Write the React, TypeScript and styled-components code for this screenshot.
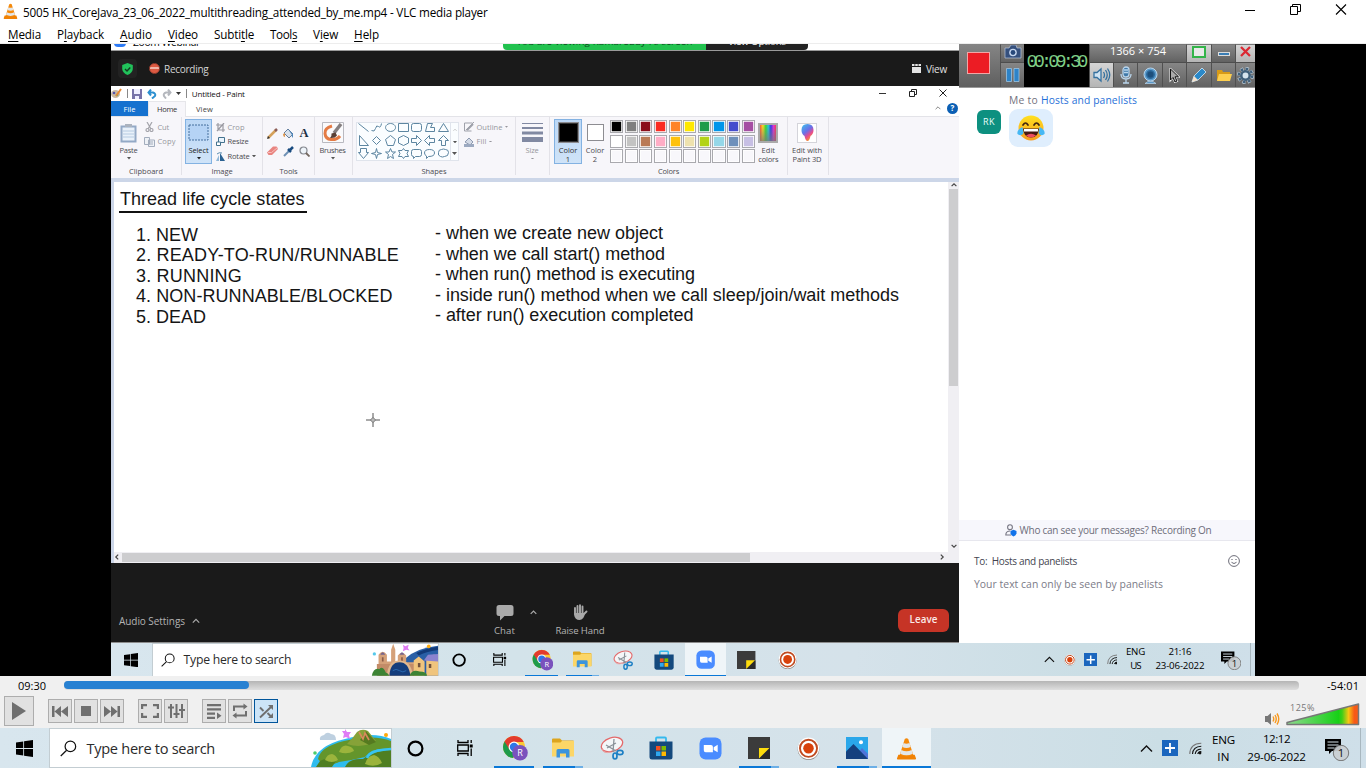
import React, { useLayoutEffect, useRef, useState } from "react";
import styled, { createGlobalStyle } from "styled-components";

const Global = createGlobalStyle`
  * { box-sizing: border-box; }
  html, body { margin: 0; padding: 0; overflow: hidden; background: #000; }
  body { font-family: "Open Sans", "Noto Sans", sans-serif; color: #000; }
  svg { display: block; flex: none; }
`;

/* ---------- text ---------- */

const TextBox = styled.span<{ $size: number; $color?: string; $bold?: number; $font?: string; $lh?: number }>`
  display: block;
  flex: none;
  width: max-content;
  white-space: pre;
  font-size: ${(p) => p.$size}px;
  line-height: ${(p) => p.$lh ?? Math.round(p.$size * 1.4)}px;
  color: ${(p) => p.$color ?? "inherit"};
  font-weight: ${(p) => p.$bold ?? 400};
  ${(p) => p.$font && `font-family: ${p.$font};`}
`;

type TProps = {
  w: number;
  size: number;
  color?: string;
  bold?: number;
  font?: string;
  lh?: number;
  children: React.ReactNode;
};

/* A label whose tracking adapts so that it always takes the given width. */
function T({ w, size, color, bold, font, lh, children }: TProps) {
  const ref = useRef<HTMLSpanElement>(null);
  const [track, setTrack] = useState(0);
  useLayoutEffect(() => {
    const el = ref.current;
    if (!el) return;
    const n = (el.textContent ?? "").length;
    if (n > 1) setTrack((t) => t + (w - el.getBoundingClientRect().width) / n);
  }, [w]);
  return (
    <TextBox ref={ref} $size={size} $color={color} $bold={bold} $font={font} $lh={lh} style={{ letterSpacing: track }}>
      {children}
    </TextBox>
  );
}

/* ---------- window chrome ---------- */

const Page = styled.main`
  width: 1366px;
  height: 768px;
  display: flex;
  flex-direction: column;
  overflow: hidden;
  background: #f0f0f0;
`;

const TitleBar = styled.header`
  height: 24px;
  background: #fff;
  display: flex;
  align-items: center;
  padding: 0 19px 1px 3px;
  gap: 5px;
`;

const WindowButtons = styled.div`
  margin-left: auto;
  display: flex;
  align-items: center;
  gap: 34px;
  padding-bottom: 4px;
`;

const MenuBar = styled.nav`
  height: 20px;
  background: #fff;
  border-bottom: 1px solid #ededed;
  display: flex;
  align-items: center;
  padding-left: 8px;
  gap: 16px;
  u { text-underline-offset: 2px; text-decoration-thickness: 1px; }
`;

const Stage = styled.section`
  height: 632px;
  background: #000;
  display: flex;
  justify-content: center;
`;

const Video = styled.div`
  width: 1144px;
  height: 632px;
  display: flex;
  flex-direction: column;
  overflow: hidden;
`;

const Split = styled.div`
  height: 599px;
  display: flex;
`;

/* ---------- webinar window ---------- */

const Webinar = styled.section`
  width: 848px;
  display: flex;
  flex-direction: column;
  background: #1a1a1a;
`;

const WebinarTitle = styled.div`
  height: 7px;
  background: #fff;
  border-bottom: 1px solid #9a9a9a;
  display: flex;
  align-items: flex-end;
  overflow: hidden;
`;
const ZoomDot = styled.div`
  width: 12px;
  height: 12px;
  border-radius: 4px;
  background: #2d7bf6;
  margin: 0 7px 3px 3px;
`;
const ClippedText = styled.div<{ $w?: number; $bg?: string; $up?: number; $ml?: number; $r?: string }>`
  height: 14px;
  width: ${(p) => (p.$w ? p.$w + "px" : "auto")};
  margin-left: ${(p) => p.$ml ?? 0}px;
  background: ${(p) => p.$bg ?? "transparent"};
  border-radius: ${(p) => p.$r ?? 0};
  display: flex;
  justify-content: center;
  align-items: flex-end;
  padding-bottom: ${(p) => p.$up ?? 0}px;
`;

const WebinarBar = styled.div`
  height: 35px;
  display: flex;
  align-items: center;
  padding: 0 12px 0 7px;
`;
const ShieldBox = styled.div`
  width: 19px;
  height: 19px;
  border-radius: 4px;
  background: #222;
  display: grid;
  place-items: center;
  margin-right: 12px;
`;
const RecDot = styled.div`
  width: 11px;
  height: 11px;
  border-radius: 50%;
  background: linear-gradient(#dd5a42 35%, #f0b5a8 38%, #f0b5a8 58%, #dd5a42 61%);
  border: 1px solid #9c3f30;
  margin-right: 4px;
`;
const ViewButton = styled.div`
  margin-left: auto;
  display: flex;
  align-items: center;
  gap: 5px;
`;

const WebinarFooter = styled.footer`
  height: 80px;
  border-bottom: 1px solid #8c8c8c;
  display: flex;
  padding: 0 10px 0 8px;
`;
const AudioSettings = styled.div`
  display: flex;
  align-items: center;
  gap: 7px;
  width: 367px;
  height: 16px;
  margin-top: 50px;
`;
const FooterAction = styled.div<{ $w: number }>`
  width: ${(p) => p.$w}px;
  margin-top: 41px;
  display: flex;
  flex-direction: column;
  align-items: center;
  gap: 3px;
`;
const ChevronSlot = styled.div`
  width: 29px;
  margin-top: 46px;
  padding-right: 9px;
  display: flex;
  justify-content: center;
`;
const Leave = styled.div`
  width: 51px;
  height: 23px;
  margin: 46px 0 0 auto;
  border-radius: 6px;
  background: #c63426;
  display: grid;
  place-items: center;
  padding-bottom: 1px;
`;

/* ---------- paint ---------- */

const Paint = styled.section`
  height: 477px;
  display: flex;
  flex-direction: column;
  background: #fff;
`;
const PaintTitle = styled.div`
  height: 15px;
  display: flex;
  align-items: center;
  gap: 4.7px;
  padding-right: 12px;
`;
const Bar = styled.i`
  width: 1px;
  height: 9px;
  background: #888;
`;
const Tabs = styled.div`
  height: 16px;
  display: flex;
  align-items: center;
  border-bottom: 1px solid #e3e3e8;
`;
const Tab = styled.div<{ $w: number; $kind?: "file" | "on" }>`
  width: ${(p) => p.$w}px;
  height: ${(p) => (p.$kind === "on" ? 16 : 15)}px;
  align-self: flex-start;
  display: grid;
  place-items: center;
  background: ${(p) => (p.$kind === "file" ? "#1571cf" : p.$kind === "on" ? "#f7f6fa" : "#fff")};
  border: ${(p) => (p.$kind === "on" ? "1px solid #e6e6ea" : "0")};
  border-bottom: 0;
  padding-bottom: ${(p) => (p.$kind === "on" ? 2 : 0)}px;
`;
const TabEnd = styled.div`
  margin-left: auto;
  display: flex;
  align-items: center;
  gap: 6px;
  padding: 0 1px 1px 0;
`;
const Help = styled.div`
  width: 11px;
  height: 11px;
  border-radius: 50%;
  background: #0b5fb4;
  display: grid;
  place-items: center;
`;
const Ribbon = styled.div`
  height: 61px;
  background: #f7f6fa;
  display: flex;
`;
const Group = styled.div<{ $w: number }>`
  width: ${(p) => p.$w}px;
  margin-bottom: 3px;
  border-right: 1px solid #e3e2e8;
  display: flex;
  flex-direction: column;
  align-items: center;
`;
const GroupBody = styled.div<{ $pl?: number; $gap?: number }>`
  height: 50px;
  flex: none;
  width: 100%;
  display: flex;
  padding-left: ${(p) => p.$pl ?? 0}px;
  gap: ${(p) => p.$gap ?? 0}px;
`;
const BigButton = styled.div<{ $w: number; $on?: boolean }>`
  width: ${(p) => p.$w}px;
  height: 45px;
  margin-top: 2px;
  flex: none;
  display: flex;
  flex-direction: column;
  align-items: center;
  background: ${(p) => (p.$on ? "linear-gradient(#bcd8f6, #cfe3f8)" : "transparent")};
  border: 1px solid ${(p) => (p.$on ? "#83b2e2" : "transparent")};
  padding-top: 2px;
`;
const IconArea = styled.div`
  height: 21px;
  display: grid;
  place-items: center;
  margin-bottom: 3px;
  flex: none;
`;
const IconGap = styled.div`
  height: 8px;
  display: grid;
  place-items: center;
`;
const SmallRows = styled.div`
  display: flex;
  flex-direction: column;
  padding-top: 5px;
  gap: 4.5px;
`;
const SmallRow = styled.div`
  display: flex;
  align-items: center;
  height: 10px;
  gap: 2.5px;
`;
const ToolGrid = styled.div`
  display: grid;
  grid-template-columns: repeat(3, 16px);
  grid-template-rows: 18px 18px;
  place-items: center;
  padding-top: 7px;
`;
const ShapeBox = styled.div`
  width: 103px;
  height: 39px;
  margin-top: 5px;
  background: #fafdff;
  border: 1px solid #e0e4ec;
  display: flex;
`;
const ShapeGrid = styled.div`
  width: 93px;
  display: grid;
  grid-template-columns: repeat(7, 13.3px);
  grid-template-rows: repeat(3, 13px);
  align-content: center;
`;
const ShapeScroll = styled.div`
  flex: 1;
  border-left: 1px solid #e0e4ec;
  display: flex;
  flex-direction: column;
  justify-content: space-around;
  align-items: center;
`;
const ColorSquare = styled.div<{ $c: string; $s: number }>`
  width: ${(p) => p.$s}px;
  height: ${(p) => p.$s}px;
  background: ${(p) => p.$c};
  border: 1px solid #8d8d92;
  box-shadow: inset 0 0 0 1px ${(p) => (p.$c === "#000" ? "#333" : "#fff")};
`;
const Palette = styled.div`
  display: grid;
  grid-template-columns: repeat(10, 13.2px);
  grid-auto-rows: 13.4px;
  gap: 1.3px 1.45px;
  margin: 3px 0 0 2px;
  height: 44px;
`;
const Swatch = styled.i<{ $c?: string }>`
  background: ${(p) => p.$c ?? "#f8f7fb"};
  border: 1px solid #a9a9ae;
  box-shadow: inset 0 0 0 0.8px #fff;
`;
const Rainbow = styled.div`
  width: 20px;
  height: 20px;
  border: 2px solid #aaa;
  background: linear-gradient(rgba(255, 255, 255, 0), rgba(120, 120, 120, 0.75)),
    linear-gradient(90deg, #f53, #fd2 18%, #3d3 36%, #2cd 52%, #33e 68%, #d3d 84%, #f35);
`;
const P3D = styled.div`
  width: 20px;
  height: 20px;
  border: 1px solid #d4d4da;
  background: #fff;
  display: grid;
  place-items: center;
`;

const Work = styled.div`
  flex: 1;
  display: flex;
  border-top: 4px solid #ccd6e8;
  border-left: 3px solid #ccd6e8;
  background: #f0eff3;
`;
const CanvasCol = styled.div`
  width: 834px;
  display: flex;
  flex-direction: column;
`;
const Canvas = styled.div`
  height: 370px;
  background: #fff;
  padding: 7px 0 0 5px;
  position: relative;
`;
const Heading = styled.div`
  width: 188px;
  height: 24px;
  border-bottom: 2px solid #111;
  padding-left: 1px;
`;
const States = styled.div`
  display: flex;
  margin-top: 10px;
  padding-left: 17px;
`;
const StateCol = styled.div<{ $w?: number; $top?: number }>`
  width: ${(p) => p.$w ?? 480}px;
  padding-top: ${(p) => p.$top ?? 0}px;
  display: flex;
  flex-direction: column;
`;
const CrossHair = styled.svg`
  position: absolute;
  left: 252px;
  top: 231px;
`;
const HScroll = styled.div`
  flex: 1;
  display: flex;
  align-items: center;
  justify-content: space-between;
  padding: 0 3px 1px 0;
`;
const HThumb = styled.div`
  width: 628px;
  height: 9px;
  margin: 0 auto 0 2px;
  background: #cdcdcf;
`;
const VScroll = styled.div`
  flex: 1;
  height: 370px;
  display: flex;
  flex-direction: column;
  align-items: center;
  padding: 0 0 3px;
`;
const VThumb = styled.div`
  width: 9px;
  height: 197px;
  margin: 1px 0 auto;
  background: #cdcdcf;
`;

/* ---------- chat side ---------- */

const Side = styled.aside`
  width: 296px;
  background: #fff;
  display: flex;
  flex-direction: column;
`;
const Recorder = styled.div`
  height: 44px;
  display: flex;
  background: #777;
  border-bottom: 1px solid #999;
`;
const RecMain = styled.div`
  width: 41px;
  background: linear-gradient(#858585, #5f5f5f);
  display: grid;
  place-items: center;
  padding-right: 2px;
`;
const RedSquare = styled.div`
  width: 23px;
  height: 22px;
  background: #ec1c24;
  border: 1px solid #f3a5a5;
  margin-top: -5px;
`;
const CellCol = styled.div<{ $w: number }>`
  width: ${(p) => p.$w}px;
  display: flex;
  flex-direction: column;
`;
const CellRow = styled.div`
  display: flex;
`;
const Cell = styled.div<{ $w: number; $h: number; $on?: boolean; $pb?: number }>`
  width: ${(p) => p.$w}px;
  height: ${(p) => p.$h}px;
  flex: none;
  background: ${(p) => (p.$on ? "linear-gradient(#d5d5d5, #b5b5b5)" : "linear-gradient(#868686, #626262)")};
  border-left: 1px solid #505050;
  border-top: 1px solid ${(p) => (p.$h > 20 ? "#4d4d4d" : "#777")};
  display: flex;
  align-items: center;
  justify-content: center;
  padding-bottom: ${(p) => p.$pb ?? 0}px;
  overflow: hidden;
`;
const Timer = styled.div`
  width: 65px;
  background: #000;
  display: grid;
  place-items: center;
  padding: 0 2px 5px 0;
`;
const ChatBody = styled.div`
  height: 432px;
  padding: 4px 0 0 18px;
`;
const Sender = styled.div`
  display: flex;
  gap: 3px;
  padding-left: 32px;
`;
const MessageRow = styled.div`
  display: flex;
  gap: 8px;
  padding-top: 1px;
`;
const Avatar = styled.div`
  width: 24px;
  height: 24px;
  margin-top: 1px;
  border-radius: 6px;
  background: #0d9080;
  display: grid;
  place-items: center;
`;
const Bubble = styled.div`
  width: 44px;
  height: 38px;
  border-radius: 9px;
  background: #dfeefd;
  display: grid;
  place-items: center;
`;
const Notice = styled.div`
  height: 21px;
  background: #f7f7fc;
  border-bottom: 1px solid #e7e7ee;
  display: flex;
  align-items: center;
  justify-content: center;
  gap: 3px;
  padding-left: 2px;
`;
const Compose = styled.div`
  padding: 12px 15px 0;
  display: flex;
  flex-direction: column;
  gap: 7px;
`;
const ComposeTop = styled.div`
  display: flex;
  align-items: center;
  justify-content: space-between;
`;

/* ---------- taskbar (all lengths in em: 10px = full size) ---------- */

const TaskbarBox = styled.footer<{ $k: number }>`
  font-size: ${(p) => p.$k * 10}px;
  height: 4em;
  flex: none;
  display: flex;
  background: linear-gradient(90deg, #d8e6ee, #d3e3ea 35%, #d5e2ea 65%, #cbdee5 85%, #cfdfe9);
`;
const Slot = styled.div<{ $w: number; $on?: boolean }>`
  width: ${(p) => p.$w / 10}em;
  height: 4em;
  flex: none;
  background: ${(p) => (p.$on ? "#eff5f8" : "transparent")};
  display: grid;
  grid-template-rows: 1fr 0.2em;
  place-items: center;
  padding-top: 0.2em;
`;
const Underline = styled.i<{ $kind: string }>`
  display: block;
  height: 2px;
  width: ${(p) => (p.$kind === "active" ? "100%" : "4em")};
  background: ${(p) =>
    p.$kind === "many" ? "linear-gradient(90deg, #0a78d7 80%, #6cafe6 80%)" : "#0a78d7"};
  align-self: end;
`;
const Search = styled.div`
  width: 34.3em;
  height: 4em;
  background: #fff;
  border: 1px solid #c3cdd2;
  display: flex;
  align-items: center;
  padding-left: 1em;
  gap: 1em;
`;
const ArtSlot = styled.div`
  margin-left: auto;
  align-self: flex-end;
`;
const Art = styled.svg`
  width: 8em;
  height: 3.9em;
`;
const Ico = styled.svg<{ $w: number; $h?: number }>`
  width: ${(p) => p.$w / 10}em;
  height: ${(p) => (p.$h ?? p.$w) / 10}em;
`;
const Tray = styled.div`
  margin-left: auto;
  display: flex;
  align-items: center;
  padding-right: 0.5em;
`;
const TrayItem = styled.div<{ $w: number; $up?: boolean }>`
  width: ${(p) => p.$w / 10}em;
  display: flex;
  flex-direction: column;
  align-items: center;
  padding-bottom: ${(p) => (p.$up ? 0.1 : 0)}em;
`;
const TrayEnd = styled.i`
  height: 4em;
  width: 1px;
  background: #a8b7bf;
`;

/* ---------- player controls ---------- */

const Controls = styled.section`
  height: 52px;
  background: #f0f0f0;
  display: flex;
  flex-direction: column;
`;
const SeekRow = styled.div`
  height: 20px;
  display: flex;
  align-items: center;
  padding-left: 18px;
`;
const Track = styled.div`
  width: 1235px;
  height: 9px;
  margin: 0 28px 2px 18px;
  border-radius: 4px;
  background: linear-gradient(#b5b5b5, #dedede);
`;
const Played = styled.div`
  width: 185px;
  height: 8px;
  border-radius: 4px;
  background: #2881d2;
`;
const ButtonRow = styled.div`
  height: 30px;
  display: flex;
  align-items: center;
  padding: 0 6px 0 4px;
`;
const Btn = styled.div<{ $s?: number; $ml?: number; $on?: boolean }>`
  width: ${(p) => p.$s ?? 24}px;
  height: ${(p) => p.$s ?? 24}px;
  margin-left: ${(p) => p.$ml ?? 2}px;
  background: ${(p) => (p.$on ? "#cce4f7" : "#e1e1e1")};
  border: 1px solid ${(p) => (p.$on ? "#00559b" : "#adadad")};
  display: grid;
  place-items: center;
`;
const Volume = styled.div`
  margin-left: auto;
  display: flex;
  align-items: flex-end;
  height: 30px;
  gap: 6px;
`;
const VolumeMeter = styled.div`
  position: relative;
  width: 74px;
  height: 24px;
  margin-bottom: 0;
`;
const VolumeText = styled.div`
  position: absolute;
  left: 4px;
  top: 0;
`;

/* ---------- icons ---------- */

const Cone = () => (
  <g>
    <path d="M3.5 18.5 2 22.5q0 1 1 1h18q1 0 1-1l-1.500-4z" fill="#f08205" />
    <path d="M5 18.500 10.200 2q1.800-1.400 3.600 0L19 18.500q-7 3.500-14 0z" fill="#f58a0c" />
    <path d="m8.900 6.200-1.300 4.200q4.400 2.200 8.800 0l-1.300-4.200q-3.100 1.600-6.200 0zM6.600 13.600l-1.200 3.800q6.600 3.400 13.200 0l-1.200-3.800q-5.400 2.600-10.800 0z" fill="#e3e7ea" />
  </g>
);
const Caret = ({ c = "#555", s = 4 }: { c?: string; s?: number }) => (
  <svg width={s} height={s * 0.6} viewBox="0 0 10 6"><path d="M0 0h10L5 6z" fill={c} /></svg>
);
const Chevron = ({ w, c, sw = 1.2, dir = "up" }: { w: number; c: string; sw?: number; dir?: string }) => {
  const d: Record<string, string> = { up: "M1 7l4-4 4 4", down: "M1 3l4 4 4-4", left: "M7 1 3 5l4 4", right: "M3 1l4 4-4 4" };
  return <svg width={w} height={w} viewBox="0 0 10 10"><path d={d[dir]} fill="none" stroke={c} strokeWidth={(sw * 10) / w} /></svg>;
};
const WinLogo = () => (
  <Ico $w={17} viewBox="0 0 16 16"><path d="M0 2.300 6.800 1.300V7.600H0zM7.600 1.200 16 0v7.600H7.600zM0 8.400h6.800v6.300L0 13.700zM7.600 8.400H16V16l-8.400-1.200z" /></Ico>
);
const Chrome = () => (
  <Ico $w={28} $h={26} viewBox="-2.500 0 28 26">
    <circle cx="11.500" cy="12" r="11" fill="#fcc934" />
    <path d="M2 6.500A11 11 0 0 0 10.500 23l5-8.500-4-2.500z" fill="#1e9b4b" />
    <path d="M11.500 7h9.700A11 11 0 0 0 2 6.500l5 8z" fill="#e33b2e" />
    <circle cx="11.500" cy="12" r="5.400" fill="#fff" /><circle cx="11.500" cy="12" r="4.200" fill="#2f76e8" />
    <circle cx="17.500" cy="17.800" r="7.800" fill="#7a52bd" />
    <text x="17.500" y="21" fontSize="9" fill="#fff" textAnchor="middle">R</text>
  </Ico>
);
const Folder = () => (
  <Ico $w={22} $h={20} viewBox="0 0 22 20">
    <path d="M0 1.500Q0 .5 1 .5h7l2 2h11q1 0 1 1V18H0z" fill="#dda51e" />
    <path d="M0 4.500h8.500l1.500-1.500h12V18.500H0z" fill="#fcd667" />
    <path d="M4.500 19.500v-7q0-1.500 1.500-1.500h10q1.500 0 1.500 1.500v7h-3.500v-4h-6v4z" fill="#3c94dc" />
  </Ico>
);
const Snip = () => (
  <Ico $w={24} viewBox="0 0 24 24" fill="none">
    <ellipse cx="12" cy="8.500" rx="11" ry="6.800" transform="rotate(-18 12 8.500)" fill="#f4f6f8" stroke="#e4696a" strokeWidth="1.300" />
    <path d="M2 13q1 5 9 3" stroke="#e9a3a3" />
    <path d="m6 9 10 6M14 3l-1 13M7 12l9-5" stroke="#8b9299" strokeWidth="1.300" />
    <ellipse cx="20" cy="16.500" rx="3" ry="2.200" stroke="#1d7fc4" strokeWidth="1.700" />
    <ellipse cx="15" cy="20" rx="2" ry="3" stroke="#1d7fc4" strokeWidth="1.700" />
  </Ico>
);
const Store = () => (
  <Ico $w={24} viewBox="0 0 24 24">
    <path d="M7 6V2.500q0-1 1-1h8q1 0 1 1V6" fill="none" stroke="#35b9ee" strokeWidth="1.800" />
    <path d="M.5 5.500h23V21q0 2.500-2.500 2.500H3Q.5 23.500.5 21z" fill="#14497d" />
    <path d="M7 10h4.500v4.500H7z" fill="#f25022" /><path d="M12.500 10H17v4.500h-4.500z" fill="#7fba00" />
    <path d="M7 15.500h4.500V20H7z" fill="#2fa8ef" /><path d="M12.500 15.500H17V20h-4.500z" fill="#ffb900" />
  </Ico>
);
const Zoom = () => (
  <Ico $w={23} viewBox="0 0 24 24">
    <rect x=".5" y=".5" width="23" height="23" rx="6.500" fill="#4a8cff" />
    <path d="M5 8.300h7.500q2 0 2 2v5.500H7q-2 0-2-2zM15.300 10.700 19.500 8v8l-4.200-2.500z" fill="#fff" />
  </Ico>
);
const Sticky = () => (
  <Ico $w={22} viewBox="0 0 22 22"><path d="M0 0h22v22H0z" fill="#3b3b3b" /><path d="M11 21.500V11h10.500z" fill="#fddc0c" /><path d="M11 22 22 11v11z" fill="#2a2a2a" /></Ico>
);
const Rec = ({ w = 23 }: { w?: number }) => (
  <Ico $w={w} viewBox="0 0 24 24">
    <circle cx="12" cy="12.500" r="11.300" fill="#8d8580" /><circle cx="12" cy="11.800" r="11.200" fill="#fff" />
    <circle cx="12" cy="11.800" r="8.900" fill="none" stroke="#c04a20" strokeWidth="2" /><circle cx="12" cy="11.800" r="5.500" fill="#d8410b" />
  </Ico>
);
const Photos = () => (
  <Ico $w={22} viewBox="0 0 22 22">
    <path d="M0 0h22v22H0z" fill="#2aa7ea" /><path d="M12 16l4-5 6 6v5H12z" fill="#4f74d8" />
    <path d="M0 14.500 7.500 7 22 22H0z" fill="#15407e" /><circle cx="15" cy="5.300" r="2" fill="#fff" />
  </Ico>
);
const TaskView = () => (
  <Ico $w={16} viewBox="0 0 16 16" fill="none" stroke="#000" strokeWidth="1.300">
    <path d="M1 0v2.500h10V0M1 16v-2.500h10V16M.7 5h10.600v6H.7zM14.200 0v3M14.200 8.500V16" /><path d="M12.700 4.500h3v3h-3z" fill="#000" stroke="none" />
  </Ico>
);
const Wifi = () => (
  <Ico $w={13} viewBox="0 0 13 13" fill="none" stroke="#111" strokeWidth="1.100">
    <path d="M.8 12Q1 1.500 12.300 1.200" stroke="#777" /><path d="M3.500 12Q4 4.500 12.300 4.200M6.200 12Q6.700 7.300 12.300 7" /><path d="M8.800 12q.4-2.200 3.500-2.400" /><circle cx="11" cy="11" r="1.400" fill="#111" stroke="none" />
  </Ico>
);
const Plus = () => (
  <Ico $w={16} viewBox="0 0 16 16"><path d="M0 0h16v16H0z" fill="#1b66be" /><path d="M8 3v10M3 8h10" stroke="#fff" strokeWidth="1.800" /></Ico>
);
const Notify = () => (
  <Ico $w={25} $h={25} viewBox="0 -1 25 25">
    <path d="M0 2h16v12H7l-3 3v-3H0z" /><path d="M2.500 5h11M2.500 8h11M2.500 11h7" stroke="#d5e1e8" strokeWidth="1.100" />
    <circle cx="16" cy="16" r="7.700" fill="#c9cfd2" fillOpacity=".93" stroke="#777" /><text x="16" y="20" fontSize="11.500" textAnchor="middle" fill="#111">1</text>
  </Ico>
);
const IslandArt = () => (
  <Art viewBox="0 0 80 39">
    <path d="M0 39Q4 18 34 11q28-8 46 0v28z" fill="#2fbcee" />
    <path d="M7 31q2-12 26-18 30-7 47 0v8q-20-2-26 8-12 3-26 5-14 7-21-3z" fill="#64952b" />
    <path d="M9 33q6-4 16 0l-4 6H5zM34 39q4-9 18-8 8-8 28-9v17z" fill="#4f7f22" />
    <path d="M36 16q6-6 10-12 5-4 11-1l8 10q-14 8-29 3z" fill="#86a238" /><path d="m55 3 10 11-7 3-9-5z" fill="#557a20" /><path d="M48 4l4 7 2-6 4 7" fill="none" stroke="#d88a5c" strokeWidth="1.600" />
    <path d="M28 24q3-8 9-6 5 1 6 5-7 4-15 1zM14 32q2-6 7-6 4 1 6 6-6 4-13 0zM54 36q2-8 9-9 5 1 8 8-8 5-17 1z" fill="#9bb43c" />
    <path d="M56 30q3-8 24-9" fill="none" stroke="#38c4f2" strokeWidth="2.500" />
    <path d="M9 12q-1-4 4-5 3-4 7-1 5 0 5 6z" fill="#bed0e0" /><circle cx="4" cy="25" r="1.800" fill="#4ccb6c" /><circle cx="75" cy="7" r="2" fill="#ffa90a" />
    <path d="m34 1 2 3 4 0-2 3 1 4-4-2-3 1 1-4-2-3h3z" fill="#e07cf5" />
  </Art>
);
const CityArt = () => (
  <Art viewBox="-4 0 80 39">
    <path d="M35 20q15-15 45-17v36H35z" fill="#295fa6" /><path d="M50 12q12-6 30-8v4q-18 2-27 7z" fill="#123a78" />
    <path d="M5 39V14q5-7 10 0v8h5V8l2.500-7L25 8v14h3V15q5-7 10 0v8h14v16z" fill="#d5a179" />
    <path d="M3 25h49v14H3z" fill="#c38c68" /><path d="M7 14q3-6 6 0zM30 14q3-6 6 0z" fill="#75658d" /><path d="M9 17h2v5H9zM32 17h2v5h-2z" fill="#8a5c48" />
    <path d="M15 39q1-18 15-18t16 18z" fill="#e0b78e" /><path d="M18 39q1-16 12-16t13 16z" fill="#143d7c" /><path d="M22 33q4-3 8 0t8 0" fill="none" stroke="#2d71b8" />
    <path d="M47 21l6-5 7 6v17H47zM62 18q6-6 14-3v24H62z" fill="#f0c47d" /><path d="m59 21 5-7 12-1v9z" fill="#8b83cf" />
    <path d="M52 24h3v5h-3zM65 25h3v5h-3z" fill="#72513c" />
    <path d="M-3 39q2-10 9-8 5-5 9 8zM42 39q3-8 12-5 8 0 9 5zM10 39q4-7 8 0z" fill="#3c8334" />
    <circle cx="0" cy="13" r="2" fill="#55c9eb" /><circle cx="65" cy="4" r="2.200" fill="#ffae13" /><path d="m34 2 3 2 4-2-1 4 2 3-4-1-4 2 1-4z" fill="#df7bf2" />
  </Art>
);

type App = { icon: React.ReactNode; line?: string };
function Taskbar({ k, art, apps, rec, lang, time, date }: {
  k: number; art: React.ReactNode; apps: App[]; rec?: boolean; lang: string; time: string; date: string;
}) {
  return (
    <TaskbarBox $k={k}>
      <Slot $w={48.5}><WinLogo /></Slot>
      <Search>
        <Ico $w={17} viewBox="0 0 18 18" fill="none" stroke="#111" strokeWidth="1.300"><circle cx="11" cy="6.800" r="5.600" /><path d="M7 10.800.8 17" /></Ico>
        <T w={128.5 * k} size={14.6 * k} color="#2b2b2b" lh={22 * k}>Type here to search</T>
        <ArtSlot>{art}</ArtSlot>
      </Search>
      <Slot $w={48}><Ico $w={17} viewBox="0 0 17 17"><circle cx="8.500" cy="8.500" r="6.900" fill="none" stroke="#000" strokeWidth="2.200" /></Ico></Slot>
      <Slot $w={50}><TaskView /></Slot>
      {apps.map((a, i) => (
        <Slot key={i} $w={49} $on={a.line === "active"}>{a.icon}{a.line && <Underline $kind={a.line} />}</Slot>
      ))}
      <Tray>
        <TrayItem $w={24}><Ico $w={13} viewBox="0 0 13 13"><path d="M1 9.500 6.500 4 12 9.500" fill="none" stroke="#111" strokeWidth="1.400" /></Ico></TrayItem>
        {rec && <TrayItem $w={25}><Rec w={14} /></TrayItem>}
        <TrayItem $w={24}><Plus /></TrayItem>
        <TrayItem $w={27}><Wifi /></TrayItem>
        <TrayItem $w={29} $up>
          <T w={23 * k} size={11.6 * k} lh={17 * k}>ENG</T>
          <T w={12.5 * k} size={11.6 * k} lh={17 * k}>{lang}</T>
        </TrayItem>
        <TrayItem $w={77} $up>
          <T w={27 * k} size={11.6 * k} lh={17.5 * k}>{time}</T>
          <T w={58.5 * k} size={11.6 * k} lh={17.5 * k}>{date}</T>
        </TrayItem>
        <TrayItem $w={45}><Notify /></TrayItem>
        <TrayEnd />
      </Tray>
    </TaskbarBox>
  );
}

const SHAPES = [
  "M1 1 11 9", "M1 8q3 2 4-2t3-2 3-3", "M6 1a5 4 0 1 0 .1 0z", "M1 1h10v8H1z", "M3 1h6q2 0 2 2v4q0 2-2 2H3q-2 0-2-2V3q0-2 2-2z", "M2 9 4 1h5L7 5l4 0v4z", "M6 1l5 8H1z",
  "M2 0v10h9z", "M6 1l4 4-4 4-4-4z", "M6 0l5 4-2 6H3L1 4z", "M6 0l5 2.500v5L6 10 1 7.500v-5z", "M1 3h5V0l5 5-5 5V7H1z", "M11 3H6V0L1 5l5 5V7h5z", "M6 0l5 5H8v5H4V5H1z",
  "M3 0h6v4h2l-5 6-5-6h2z", "M6 0l1 4 4 1-4 1-1 4-1-4-4-1 4-1z", "M6 0l1.500 3.500H11L8 6l1 4-3-2-3 2 1-4-3-2.500h3.500z", "M6 0l1.500 2H11L9.500 5 11 8H7.500L6 10 4.500 8H1l1.500-3L1 2h3.500z", "M3 1h6q2 0 2 2v3q0 2-2 2H5l-2 2V8Q1 8 1 6V3q0-2 2-2z", "M6 1q5 0 5 3.500T5 8l-2 2V7.500Q1 6.500 1 4.500 1 1 6 1z", "M4 1q2-1 4 0 3 0 3 3 0 4-4 4-2 1-4 0Q0 7 1 4q0-3 3-3z",
];
const COLORS = [
  "#000", "#7f7f7f", "#8b0d1a", "#fa2b22", "#ff8427", "#ffe800", "#1e9c49", "#0095ea", "#444ccd", "#a54fa3",
  "#fff", "#c3c3c3", "#ba7a56", "#ffadc6", "#ffc10c", "#eee2ae", "#b3d317", "#94d7e8", "#6e90bb", "#c7bfe4",
];
const GREY = "#96969c";
const INK = "#4b4b50";

function Lbl({ w, c = INK, children }: { w: number; c?: string; children: React.ReactNode }) {
  return <T w={w} size={7.5} lh={8.5} color={c}>{children}</T>;
}

const PaintButtons = styled.div`
  margin-left: auto;
  display: flex;
  align-items: center;
  gap: 22px;
  padding-bottom: 2px;
`;

function PaintWindow() {
  return (
    <Paint>
      <PaintTitle>
        <svg width="11" height="11" viewBox="0 0 11 11"><ellipse cx="4.500" cy="6" rx="4.500" ry="4" fill="#c9b9a4" /><circle cx="3" cy="5" r="1.300" fill="#55a" /><circle cx="6" cy="7" r="1.300" fill="#4b8" /><path d="m5 8 5-7" stroke="#e58735" strokeWidth="2" /></svg>
        <Bar />
        <svg width="10" height="10" viewBox="0 0 10 10"><path d="M0 0h10v10H0z" fill="#7773a9" /><path d="M2 0h6v5H2zM3 7h4v3H3z" fill="#eef" /></svg>
        <svg width="10" height="10" viewBox="0 0 10 10" fill="none" stroke="#2d90d0" strokeWidth="2"><path d="M1 3.500h5q3 1 2 3.500L5 9.500M4 .500 1.500 3.500l2.500 3" /></svg>
        <svg width="10" height="10" viewBox="0 0 10 10" fill="none" stroke="#b4b7bd" strokeWidth="2"><path d="M9 3.500H4Q1 4.500 2 7l2 2.500M6 .500l2.500 3L6 6.500" /></svg>
        <Caret s={5} c="#333" />
        <Bar />
        <T w={53} size={8} lh={12} color="#111">Untitled - Paint</T>
        <PaintButtons>
          <svg width="8" height="8" viewBox="0 0 8 8"><path d="M0 4.500h7" stroke="#333" /></svg>
          <svg width="8" height="8" viewBox="0 0 8 8" fill="none" stroke="#222"><path d="M.5 2.500h5v5h-5zM2.500 2V.500h5v5H6" /></svg>
          <svg width="8" height="8" viewBox="0 0 8 8" stroke="#222"><path d="m.5.500 7 7M7.500.500l-7 7" /></svg>
        </PaintButtons>
      </PaintTitle>
      <Tabs>
        <Tab $w={37} $kind="file"><T w={12} size={7.5} color="#fff" lh={10}>File</T></Tab>
        <Tab $w={38} $kind="on"><T w={20} size={7.5} color="#333" lh={10}>Home</T></Tab>
        <Tab $w={37}><T w={17} size={7.5} color="#444" lh={10}>View</T></Tab>
        <TabEnd><Chevron w={6} c="#888" sw={1} /><Help><T w={4} size={8} color="#fff" bold={700} lh={10}>?</T></Help></TabEnd>
      </Tabs>
      <Ribbon>
        <Group $w={71}>
          <GroupBody $pl={7} $gap={5}>
            <BigButton $w={21}>
              <IconArea><svg width="17" height="20" viewBox="0 0 17 20"><path d="M.5 2.500h16v17H.5z" fill="#93a9c6" /><path d="M2.500 4.500h12v13h-12z" fill="#e9f1fa" /><path d="M5 1h7v3H5z" fill="#abb3bf" /><path d="M3 8h11M3 11h11M3 14h11" stroke="#b6cbe2" /></svg></IconArea>
              <Lbl w={18}>Paste</Lbl><IconGap><Caret /></IconGap>
            </BigButton>
            <SmallRows>
              <SmallRow><svg width="11" height="10" viewBox="0 0 11 10" fill="none" stroke="#a3a3aa" strokeWidth="1.200"><path d="m3 0 4 7M8 0 4 7" /><circle cx="3.500" cy="8" r="1.500" /><circle cx="7.500" cy="8" r="1.500" /></svg><Lbl w={11.5} c={GREY}>Cut</Lbl></SmallRow>
              <SmallRow><svg width="11" height="10" viewBox="0 0 11 10" fill="#eef1f6" stroke="#a3adbd"><path d="M.5.500h5v7h-5zM4.500 3h6v6.500h-6z" /><path d="M6 5h3M6 7h3" /></svg><Lbl w={18} c={GREY}>Copy</Lbl></SmallRow>
            </SmallRows>
          </GroupBody>
          <Lbl w={34}>Clipboard</Lbl>
        </Group>
        <Group $w={81}>
          <GroupBody $pl={3} $gap={4}>
            <BigButton $w={27} $on>
              <IconArea><svg width="21" height="17" viewBox="0 0 21 17"><path d="M1 1h19v15H1z" fill="#b5d3f5" stroke="#456e9d" strokeDasharray="2 1" /></svg></IconArea>
              <Lbl w={20} c="#222">Select</Lbl><IconGap><Caret c="#222" /></IconGap>
            </BigButton>
            <SmallRows>
              <SmallRow><svg width="9" height="9" viewBox="0 0 9 9" fill="none" stroke="#9a9aa2" strokeWidth="1.200"><path d="M2 0v7h7M0 2h7v7M1 8l7-8" /></svg><Lbl w={17} c={GREY}>Crop</Lbl></SmallRow>
              <SmallRow><svg width="9" height="9" viewBox="0 0 9 9"><path d="M2.500.500h6v5h-6z" fill="#e9f4fd" stroke="#44728e" /><path d="M.5 5h4v3.500h-4z" fill="#fff" stroke="#44728e" /></svg><Lbl w={21}>Resize</Lbl></SmallRow>
              <SmallRow><svg width="9" height="9" viewBox="0 0 9 9"><path d="M4 1v8h5z" fill="#2b6292" /><path d="M3 3v6H0z" fill="#8fb7d8" /><path d="M1 2q2-2 5-1" stroke="#5a8cb0" fill="none" /></svg><Lbl w={22}>Rotate</Lbl><Caret /></SmallRow>
            </SmallRows>
          </GroupBody>
          <Lbl w={21}>Image</Lbl>
        </Group>
        <Group $w={52}>
          <GroupBody $pl={1}>
            <ToolGrid>
              <svg width="11" height="11" viewBox="0 0 11 11"><path d="m1 10 8-8" stroke="#d5a15a" strokeWidth="2.500" /><path d="m0 11 1-3 2 2z" fill="#333" /><path d="m8 3 2-2" stroke="#8b5d58" strokeWidth="2.500" /></svg>
              <svg width="11" height="11" viewBox="0 0 11 11"><path d="m1 5 4-4 5 5-4 4z" fill="#d8e1ec" stroke="#667f9c" /><path d="m5 1 5 5v4q-2-2-1-3z" fill="#4d86bc" /><path d="m0 6 2-1v4q-2 0-2-3z" fill="#dd9750" /></svg>
              <T w={9} size={12.5} bold={700} font='"Liberation Serif", serif' lh={12} color="#1c2f45">A</T>
              <svg width="11" height="10" viewBox="0 0 11 10"><path d="M0 6.500 6 .500h3.500L11 3 5 9H1.500z" fill="#e88480" /><path d="M1 6.500h3.500l6-5" stroke="#f9bdba" fill="none" /></svg>
              <svg width="11" height="11" viewBox="0 0 11 11"><path d="m1 10 6-6" stroke="#6e90b4" strokeWidth="2" /><path d="m5 3 3 3M7 4l3-3" stroke="#194b80" strokeWidth="2.500" /></svg>
              <svg width="11" height="11" viewBox="0 0 11 11"><circle cx="4.500" cy="4.500" r="3.500" fill="#eef4fa" stroke="#85888f" strokeWidth="1.200" /><path d="m7 7 3.500 3.500" stroke="#73675f" strokeWidth="1.800" /></svg>
            </ToolGrid>
          </GroupBody>
          <Lbl w={18}>Tools</Lbl>
        </Group>
        <Group $w={38}>
          <GroupBody $pl={2}>
            <BigButton $w={31}>
              <IconArea><svg width="22" height="21" viewBox="0 0 22 21"><path d="M.5.500h21v20H.5z" fill="#fafafc" stroke="#b9b9c0" /><path d="M10 4Q2.500 6 3 11.500t6 6Q15 18 18 14" fill="none" stroke="#e47b45" strokeWidth="3" /><path d="m12 11 7-9" stroke="#857f80" strokeWidth="3.500" /><path d="M8 16q2-2 1.500-4.500l4-1 1.500 3q-2 3-7 2.500z" fill="#5a3f35" /></svg></IconArea>
              <Lbl w={26}>Brushes</Lbl><IconGap><Caret /></IconGap>
            </BigButton>
          </GroupBody>
        </Group>
        <Group $w={163}>
          <GroupBody $pl={3} $gap={5}>
            <ShapeBox>
              <ShapeGrid>
                {SHAPES.map((d, i) => <svg key={i} width="13" height="11" viewBox="-.5 -.5 13 11"><path d={d} fill="none" stroke="#54809c" strokeWidth=".95" /></svg>)}
              </ShapeGrid>
              <ShapeScroll><Chevron w={4} c="#bbb" sw={0.8} /><Caret /><Caret s={5} /></ShapeScroll>
            </ShapeBox>
            <SmallRows>
              <SmallRow><svg width="10" height="10" viewBox="0 0 10 10" fill="none" stroke="#9fa1aa"><path d="M.5 1h8M.5 1v8h7M2 8l8-8" /><path d="m3 8 6-6" strokeWidth="2" /></svg><Lbl w={26} c={GREY}>Outline</Lbl><Caret s={3} c={GREY} /></SmallRow>
              <SmallRow><svg width="10" height="10" viewBox="0 0 10 10"><path d="m1 5 4-4 4 4-3 3z" fill="#d4dae6" stroke="#8e9ab0" /><path d="M0 7h10v3H0z" fill="#9ca9c0" /></svg><Lbl w={10} c={GREY}>Fill</Lbl><Caret s={3} c={GREY} /></SmallRow>
            </SmallRows>
          </GroupBody>
          <Lbl w={25}>Shapes</Lbl>
        </Group>
        <Group $w={34}>
          <GroupBody $pl={2}>
            <BigButton $w={28}>
              <IconArea><svg width="21" height="19" viewBox="0 0 21 19" fill="#8189a2"><path d="M0 0h21v1H0zM0 4h21v2H0zM0 8.500h21v3H0zM0 14h21v5H0z" /></svg></IconArea>
              <Lbl w={13} c={GREY}>Size</Lbl><IconGap><Caret s={3} c={GREY} /></IconGap>
            </BigButton>
          </GroupBody>
        </Group>
        <Group $w={238}>
          <GroupBody $pl={4}>
            <BigButton $w={28} $on><IconArea><ColorSquare $c="#000" $s={21} /></IconArea><Lbl w={18.5} c="#333">Color</Lbl><Lbl w={4} c="#333">1</Lbl></BigButton>
            <BigButton $w={26}><IconArea><ColorSquare $c="#fff" $s={17} /></IconArea><Lbl w={18.5}>Color</Lbl><Lbl w={4}>2</Lbl></BigButton>
            <Palette>{Array.from({ length: 30 }, (_, i) => <Swatch key={i} $c={COLORS[i]} />)}</Palette>
            <BigButton $w={27}><IconArea><Rainbow /></IconArea><Lbl w={13.5}>Edit</Lbl><Lbl w={20}>colors</Lbl></BigButton>
          </GroupBody>
          <Lbl w={21}>Colors</Lbl>
        </Group>
        <Group $w={41}>
          <GroupBody $pl={2}>
            <BigButton $w={34}>
              <IconArea><P3D><svg width="13" height="17" viewBox="0 0 13 17"><defs><linearGradient id="p3d" x1="0" y1="0" x2=".6" y2="1"><stop offset="0" stopColor="#38c6ec" /><stop offset=".5" stopColor="#6b6ee8" /><stop offset=".75" stopColor="#e94b8c" /><stop offset="1" stopColor="#f49a2b" /></linearGradient></defs><path d="M6.500 0q6 0 6 6 0 4-3 6-1 5-3 5t-3-5q-3-2-3-6 0-6 6-6z" fill="url(#p3d)" /></svg></P3D></IconArea>
              <Lbl w={30}>Edit with</Lbl><Lbl w={29}>Paint 3D</Lbl>
            </BigButton>
          </GroupBody>
        </Group>
      </Ribbon>
      <Work>
        <CanvasCol>
          <Canvas>
            <Heading><Big w={184.5}>Thread life cycle states</Big></Heading>
            <States>
              <StateCol $w={299} $top={1.5}>
                <Big w={62}>1. NEW</Big>
                <Big w={263}>2. READY-TO-RUN/RUNNABLE</Big>
                <Big w={106}>3. RUNNING</Big>
                <Big w={256.5}>4. NON-RUNNABLE/BLOCKED</Big>
                <Big w={70}>5. DEAD</Big>
              </StateCol>
              <StateCol>
                <Big w={228}>- when we create new object</Big>
                <Big w={230}>- when we call start() method</Big>
                <Big w={260}>- when run() method is executing</Big>
                <Big w={464}>- inside run() method when we call sleep/join/wait methods</Big>
                <Big w={258.5}>- after run() execution completed</Big>
              </StateCol>
            </States>
            <CrossHair width="14" height="14" viewBox="0 0 14 14"><path d="M7 0v14M0 7h14" stroke="#555" /><circle cx="7" cy="7" r="2" fill="#fff" stroke="#777" strokeWidth=".8" /><path d="M7 4v6M4 7h6" stroke="#777" strokeWidth=".6" /></CrossHair>
          </Canvas>
          <HScroll><Chevron w={6} c="#444" dir="left" /><HThumb /><Chevron w={6} c="#444" dir="right" /></HScroll>
        </CanvasCol>
        <VScroll><Chevron w={6} c="#444" /><VThumb /><Chevron w={6} c="#444" dir="down" /></VScroll>
      </Work>
    </Paint>
  );
}

function Big({ w, children }: { w: number; children: React.ReactNode }) {
  return <T w={w} size={18} lh={20.6} font='"Liberation Sans", Arial, sans-serif' color="#151515">{children}</T>;
}

function ChatSide() {
  const blue = "#2d83c8";
  return (
    <Side>
      <Recorder>
        <RecMain><RedSquare /></RecMain>
        <CellCol $w={24}>
          <Cell $w={24} $h={18} $pb={4}><svg width="18" height="14" viewBox="0 0 18 14"><path d="M1 3h4l2-3h5l1 3h4v10H1z" fill="#35507d" stroke="#b7c6dd" strokeWidth=".7" /><circle cx="9" cy="7.500" r="3.800" fill="#c6d6ef" /><circle cx="9" cy="7.500" r="2.400" fill="#28497b" /></svg></Cell>
          <Cell $w={24} $h={25}><svg width="14" height="14" viewBox="0 0 14 14" fill={blue} stroke="#a6cdeb" strokeWidth=".7"><path d="M.5.500h5v13h-5zM8 .500h5v13H8z" /></svg></Cell>
        </CellCol>
        <Timer><T w={58} size={18.5} font='"Liberation Mono", monospace' color="#7fce86" lh={22}>00:09:30</T></Timer>
        <CellCol $w={166}>
          <CellRow>
            <Cell $w={97} $h={18} $pb={5}><T w={56} size={11} color="#fff" lh={12}>1366 × 754</T></Cell>
            <Cell $w={25} $h={18} $on $pb={4}><svg width="14" height="12" viewBox="0 0 14 12"><path d="M1 1h12v10H1z" fill="#e9e9e9" stroke="#34b44a" strokeWidth="2" /></svg></Cell>
            <Cell $w={24} $h={18}><svg width="12" height="4" viewBox="0 0 12 4"><path d="M0 0h12v4H0z" fill="#ddd" /><path d="M1 1h10v2H1z" fill="#3b7eb5" /></svg></Cell>
            <Cell $w={20} $h={18} $on $pb={4}><svg width="11" height="11" viewBox="0 0 11 11"><path d="m1 1 9 9M10 1l-9 9" stroke="#db2832" strokeWidth="2.300" /></svg></Cell>
          </CellRow>
          <CellRow>
            <Cell $w={24} $h={25} $on><svg width="18" height="16" viewBox="0 0 18 16" fill="none" stroke="#35719f" strokeWidth="1.300"><path d="M1 5.500h3L8 2v12l-4-3.500H1z" fill="#cfe3f3" /><path d="M10.500 5q2 3 0 6M12.500 3q3.500 5 0 10M14.500 1.500q4.500 6.500 0 13" /></svg></Cell>
            <Cell $w={24} $h={25}><svg width="12" height="18" viewBox="0 0 12 18" fill="none" stroke="#b9d5ec" strokeWidth="1.300"><rect x="3" y="1" width="6" height="10" rx="3" fill="#3f78a8" /><path d="M1 8q0 5 5 5t5-5M6 13v4M3 17h6M4 4h4M4 6.500h4" /></svg></Cell>
            <Cell $w={25} $h={25}><svg width="17" height="17" viewBox="0 0 17 17"><path d="M3 16.500q5.500-5 11 0z" fill="#5c98c7" stroke="#b9d5ec" strokeWidth=".7" /><circle cx="8.500" cy="7.500" r="6.500" fill="#5b9ccd" stroke="#b9d5ec" /><circle cx="8.500" cy="7.500" r="3.700" fill="#1d4f7c" stroke="#2d6a9c" strokeWidth="1.500" /></svg></Cell>
            <Cell $w={24} $h={25}><svg width="11" height="15" viewBox="0 0 11 15"><path d="M1.500 1v11l2.500-2.500 2 4.500 2-1-2-4.200h3.500z" fill="#888" stroke="#eee" strokeWidth="2" /><path d="M1.500 1v11l2.500-2.500 2 4.500 2-1-2-4.200h3.500z" fill="#aaa" stroke="#111" /></svg></Cell>
            <Cell $w={25} $h={25}><svg width="16" height="16" viewBox="0 0 16 16"><path d="m1 15 2-6 8-8 4 4-8 8z" fill="#2b89c9" stroke="#d9ecf8" strokeWidth=".8" /><path d="m1 15 2-6 4 4z" fill="#f6e3cd" /></svg></Cell>
            <Cell $w={24} $h={25}><svg width="16" height="14" viewBox="0 0 16 14"><path d="M1 13V2h5l1 2h7v9z" fill="#d79a17" /><path d="m1 13 2-7h13l-2 7z" fill="#fdcf4f" /></svg></Cell>
            <Cell $w={20} $h={25}><svg width="17" height="17" viewBox="0 0 17 17"><circle cx="8.500" cy="8.500" r="6.700" fill="none" stroke="#d6e4ee" strokeWidth="3.500" strokeDasharray="3 2.260" /><circle cx="8.500" cy="8.500" r="6.700" fill="none" stroke="#41617c" strokeWidth="2.500" strokeDasharray="2.600 2.660" /><circle cx="8.500" cy="8.500" r="4.200" fill="#d6e4ee" stroke="#41617c" strokeWidth="2.500" /></svg></Cell>
          </CellRow>
        </CellCol>
      </Recorder>
      <ChatBody>
        <Sender><T w={29} size={10.3} lh={16} color="#72727d">Me to</T><T w={96} size={10.3} lh={16} color="#1f70d8">Hosts and panelists</T></Sender>
        <MessageRow>
          <Avatar><T w={12} size={9} lh={12} color="#e9fffb">RK</T></Avatar>
          <Bubble>
            <svg width="28" height="27" viewBox="0 0 28 27">
              <defs><linearGradient id="face" x1="0" y1="0" x2="0" y2="1"><stop offset="0" stopColor="#ffe11f" /><stop offset="1" stopColor="#f89c20" /></linearGradient></defs>
              <circle cx="14" cy="13" r="12.500" fill="url(#face)" />
              <path d="M6 10q2.500-4 5 0M17 10q2.500-4 5 0" fill="none" stroke="#3f2410" strokeWidth="1.700" strokeLinecap="round" />
              <path d="M6 13.500h16q-.5 9-8 9t-8-9z" fill="#471a12" /><path d="M7 14h14v2.500H7z" fill="#fff" /><path d="M9 20.500q5-3.500 10 0-5 4-10 0z" fill="#ee4d62" />
              <path d="M5.500 12q-6 3-5 7 4 3 6-1zM22.500 12q6 3 5 7-4 3-6-1z" fill="#46b8f4" />
            </svg>
          </Bubble>
        </MessageRow>
      </ChatBody>
      <Notice>
        <svg width="12" height="13" viewBox="0 0 12 13" fill="none" stroke="#777784" strokeWidth="1.100"><circle cx="5" cy="3.200" r="2.400" /><path d="M6 11H.8q0-4 4.500-4" /><path d="m8.500 5.800 3 1.200v2.500q-.5 2-3 3-2.500-1-3-3V7z" fill="#1173ea" stroke="none" /></svg>
        <T w={192} size={10} lh={14} color="#6d6d7a">Who can see your messages? Recording On</T>
      </Notice>
      <Compose>
        <ComposeTop>
          <T w={103} size={10} lh={16} color="#444450">To:  Hosts and panelists</T>
          <svg width="12" height="12" viewBox="0 0 12 12" fill="none" stroke="#6d6d78"><circle cx="6" cy="6" r="5.400" /><path d="M3.500 7.300q2.500 2.500 5 0" /><path d="M4 4v1M8 4v1" strokeWidth="1.200" /></svg>
        </ComposeTop>
        <T w={189} size={10.4} lh={16} color="#7b7b87">Your text can only be seen by panelists</T>
      </Compose>
    </Side>
  );
}

const G = "#6f6f6f";

export default function App() {
  const menus = [["", "M", "edia", 33], ["P", "l", "ayback", 47], ["", "A", "udio", 32], ["", "V", "ideo", 30], ["Subti", "t", "le", 40], ["Tool", "s", "", 27], ["V", "i", "ew", 25], ["", "H", "elp", 25]] as const;
  return (
    <>
      <Global />
      <Page>
        <TitleBar>
          <svg width="15" height="17" viewBox="1 1 22 23"><Cone /></svg>
          <T w={464.5} size={11.7} lh={16}>5005 HK_CoreJava_23_06_2022_multithreading_attended_by_me.mp4 - VLC media player</T>
          <WindowButtons>
            <svg width="11" height="11" viewBox="0 0 11 11"><path d="M0 6.500h10" stroke="#000" /></svg>
            <svg width="11" height="11" viewBox="0 0 11 11" fill="none" stroke="#000"><path d="M.5 2.500h7v8h-7zM2.500 2V.500h8v7H8" /></svg>
            <svg width="12" height="11" viewBox="0 0 12 11" stroke="#000" strokeWidth="1.100"><path d="m1 .500 10 10M11 .500l-10 10" /></svg>
          </WindowButtons>
        </TitleBar>
        <MenuBar>
          {menus.map(([a, u, b, w]) => <T key={w + u} w={w} size={11.7} lh={16}>{a}<u>{u}</u>{b}</T>)}
        </MenuBar>
        <Stage>
          <Video>
            <Split>
              <Webinar>
                <WebinarTitle>
                  <ZoomDot />
                  <ClippedText $up={2}><T w={67} size={10.3} lh={12}>Zoom Webinar</T></ClippedText>
                  <ClippedText $ml={303} $w={203} $bg="#22c24f" $up={2} $r="0 0 0 4px"><T w={176} size={9.7} lh={12} color="#0b4a1d">You are viewing Ramareddy I's screen</T></ClippedText>
                  <ClippedText $w={102} $bg="#222" $up={2} $r="0 0 4px 0"><T w={58} size={9.7} lh={12} color="#fff">View Options</T></ClippedText>
                </WebinarTitle>
                <WebinarBar>
                  <ShieldBox><svg width="11" height="12" viewBox="0 0 11 12"><path d="m5.500 0 5.300 2v4q-.5 4-5.300 6Q.7 10 .2 6V2z" fill="#21c25b" /><path d="m3 6 2 2 3.300-3.500" fill="none" stroke="#123b20" strokeWidth="1.400" /></svg></ShieldBox>
                  <RecDot />
                  <T w={44.5} size={10} lh={14} color="#d4d4d4">Recording</T>
                  <ViewButton>
                    <svg width="9" height="9" viewBox="0 0 9 9" fill="#e4e4e4"><path d="M0 0h2.500v2H0zM3.250 0h2.500v2h-2.500zM6.500 0H9v2H6.500zM0 3h9v6H0z" /></svg>
                    <T w={21} size={10} lh={14} color="#e0e0e0">View</T>
                  </ViewButton>
                </WebinarBar>
                <PaintWindow />
                <WebinarFooter>
                  <AudioSettings><T w={66} size={10} lh={14} color="#b3b3b3">Audio Settings</T><Chevron w={8} c="#aaa" /></AudioSettings>
                  <FooterAction $w={37}>
                    <svg width="18" height="17" viewBox="0 0 18 17"><path d="M3 1h12q2.500 0 2.500 2.500v6Q17.500 12 15 12H8.500L4 16.500V12H3Q.5 12 .5 9.500v-6Q.5 1 3 1z" fill="#a9a9a9" /></svg>
                    <T w={21} size={9.6} lh={14} color="#b3b3b3">Chat</T>
                  </FooterAction>
                  <ChevronSlot><Chevron w={7} c="#aaa" /></ChevronSlot>
                  <FooterAction $w={56}>
                    <svg width="16" height="17" viewBox="0 0 16 17" fill="none" stroke="#a9a9a9" strokeWidth="1.900" strokeLinecap="round"><path d="M3 10V4M5.500 9V2M8 9V1.200M10.500 9V2.500M11 11l3.500-3.500" /><path d="M2.100 9h9.400l1.500 0q-1 7-5.500 7t-5.400-5z" fill="#a9a9a9" stroke="none" /></svg>
                    <T w={49} size={9.6} lh={14} color="#b3b3b3">Raise Hand</T>
                  </FooterAction>
                  <Leave><T w={28} size={9.8} bold={600} lh={14} color="#fbeae8">Leave</T></Leave>
                </WebinarFooter>
              </Webinar>
              <ChatSide />
            </Split>
            <Taskbar
              k={0.8375}
              art={<CityArt />}
              apps={[{ icon: <Chrome />, line: "one" }, { icon: <Folder />, line: "many" }, { icon: <Snip /> }, { icon: <Store /> }, { icon: <Zoom />, line: "active" }, { icon: <Sticky /> }, { icon: <Rec /> }]}
              rec lang="US" time="21:16" date="23-06-2022"
            />
          </Video>
        </Stage>
        <Controls>
          <SeekRow>
            <T w={28} size={11} lh={16}>09:30</T>
            <Track><Played /></Track>
            <T w={32} size={11} lh={16}>-54:01</T>
          </SeekRow>
          <ButtonRow>
            <Btn $s={30} $ml={0}><svg width="14" height="18" viewBox="0 0 14 18"><path d="M0 0l14 9-14 9z" fill={G} /></svg></Btn>
            <Btn $ml={14}><svg width="16" height="11" viewBox="0 0 16 11" fill={G}><path d="M0 0h2.500v11H0zM9 0v11L2.500 5.500zM16 0v11L9 5.500z" /></svg></Btn>
            <Btn><svg width="10" height="10"><rect width="10" height="10" fill={G} /></svg></Btn>
            <Btn><svg width="16" height="11" viewBox="0 0 16 11" fill={G}><path d="M13.500 0H16v11h-2.500zM7 0v11l6.500-5.500zM0 0v11l7-5.500z" /></svg></Btn>
            <Btn $ml={14}><svg width="18" height="14" viewBox="0 0 18 14" fill="none" stroke={G} strokeWidth="2.200"><path d="M1.100 5V1.100H6M12 1.100h4.900V5M1.100 9v3.900H6M12 12.900h4.900V9" /></svg></Btn>
            <Btn><svg width="17" height="14" viewBox="0 0 17 14" fill="none" stroke={G} strokeWidth="2"><path d="M3 0v14M8.500 0v14M14 0v14" /><path d="M0 3.500h6M5.500 10h6M11 6h6" /></svg></Btn>
            <Btn $ml={14}><svg width="16" height="15" viewBox="0 0 16 15" fill={G}><path d="M1 0h14v2.200H1zM1 4.300h14v2.200H1zM1 8.600h8v2.200H1zM1 12.800h8V15H1zM11 8.500l4.500 3.200L11 15z" /></svg></Btn>
            <Btn><svg width="16" height="16" viewBox="0 0 16 16" fill="none" stroke={G} strokeWidth="2"><path d="M2 8V3.500H12.500M14 8v4.500H3.500" /><path d="M11.500 .500l4 3-4 3zM4.500 9.500l-4 3 4 3z" fill={G} stroke="none" /></svg></Btn>
            <Btn $on><svg width="15" height="15" viewBox="0 0 15 15" fill="none" stroke={G} strokeWidth="1.900"><path d="M1 13.500 12 3M1 3.500l3.500 3.500M8.500 9l4 4" /><path d="M9 1h5v5zM14 9v5H9z" fill={G} stroke="none" /></svg></Btn>
            <Volume>
              <svg width="15" height="14" viewBox="0 0 15 14"><path d="M0 4h2.500L6 1v12l-3.500-3H0z" fill="#777" /><path d="M8 4.500q1.500 2.500 0 5M10 3q2.500 4 0 8M12 1.500q3.500 5.500 0 11" fill="none" stroke="#f8981d" strokeWidth="1.400" /></svg>
              <VolumeMeter>
                <svg width="74" height="24" viewBox="0 0 74 24">
                  <defs><linearGradient id="vol"><stop offset="0" stopColor="#8fd98f" /><stop offset=".72" stopColor="#17d017" /><stop offset=".77" stopColor="#3fce17" /><stop offset=".86" stopColor="#f6c713" /><stop offset=".94" stopColor="#f75a17" /></linearGradient></defs>
                  <path d="M1 20.500 72.500 2v20.500H1z" fill="url(#vol)" stroke="#777" strokeWidth="1.500" strokeLinejoin="round" />
                </svg>
                <VolumeText><T w={25} size={9} lh={12} color="#777">125%</T></VolumeText>
              </VolumeMeter>
            </Volume>
          </ButtonRow>
        </Controls>
        <Taskbar
          k={1}
          art={<IslandArt />}
          apps={[{ icon: <Chrome />, line: "one" }, { icon: <Folder />, line: "many" }, { icon: <Snip /> }, { icon: <Store /> }, { icon: <Zoom /> }, { icon: <Sticky />, line: "many" }, { icon: <Rec /> }, { icon: <Photos />, line: "many" }, { icon: <Ico $w={23} viewBox="0 0 24 24"><Cone /></Ico>, line: "active" }]}
          lang="IN" time="12:12" date="29-06-2022"
        />
      </Page>
    </>
  );
}
